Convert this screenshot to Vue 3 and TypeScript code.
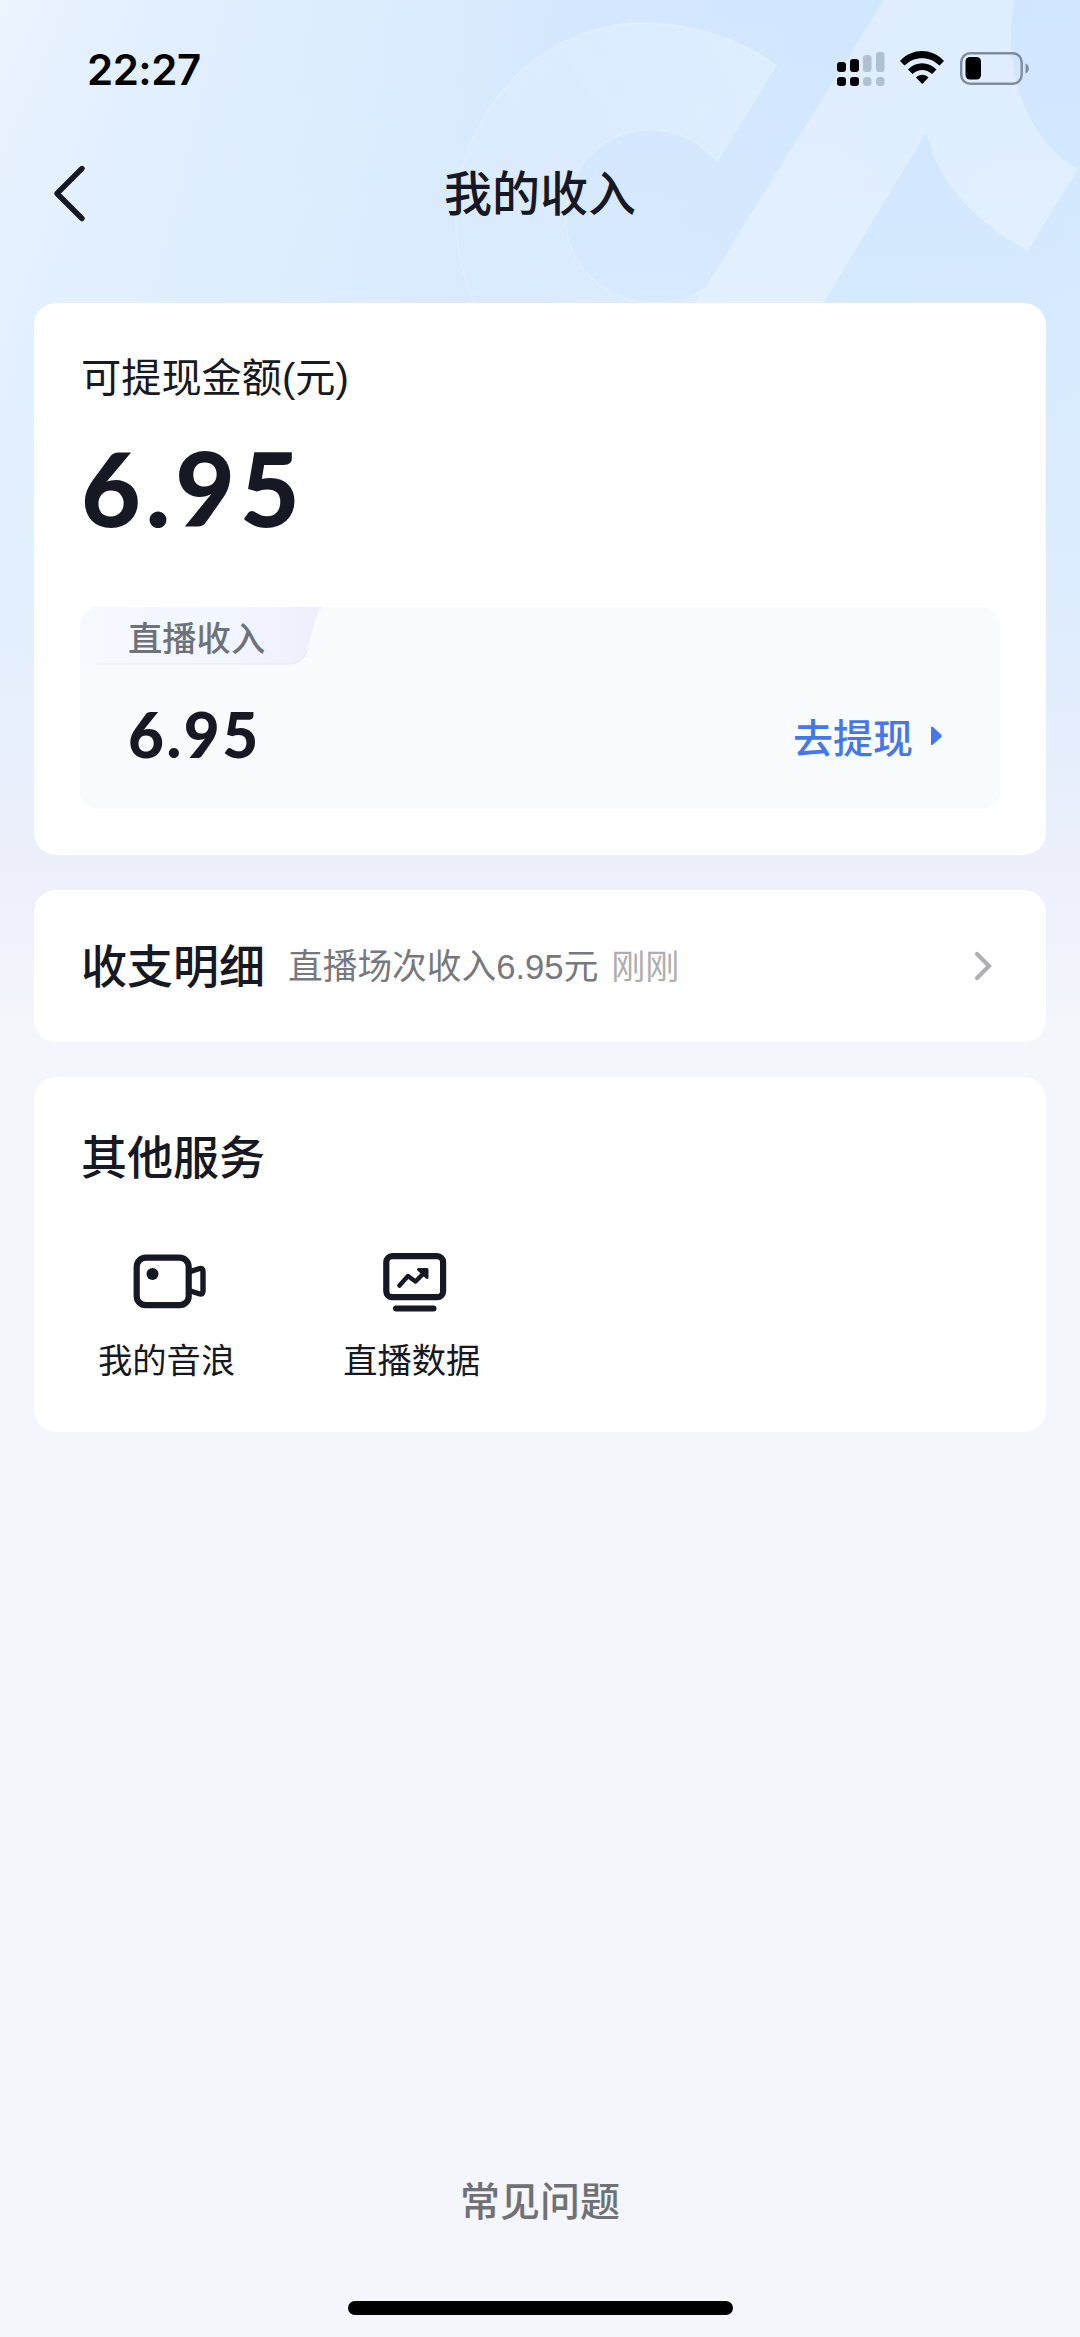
<script setup lang="ts">
interface Service {
  key: 'camera' | 'chart'
  label: string
}

const amount = '6.95'
const services: Service[] = [
  { key: 'camera', label: '我的音浪' },
  { key: 'chart', label: '直播数据' },
]
</script>

<template>
  <div class="page">
    <svg class="watermark" width="1080" height="310" viewBox="0 0 1080 310" aria-hidden="true">
      <defs>
        <linearGradient id="mark" x1="450" y1="260" x2="760" y2="60" gradientUnits="userSpaceOnUse">
          <stop offset="0" stop-color="#fff" stop-opacity="0.03" />
          <stop offset="1" stop-color="#fff" stop-opacity="0.26" />
        </linearGradient>
      </defs>
      <path
        d="M776 65C735 37 690 23 643 23C540 23 456 115 456 215C456 250 463 280 478 312L690 312L704 288C690 299 675 303 657 303C605 303 566 265 566 220C566 170 600 130 650 130C676 130 699 141 717 161Z"
        fill="url(#mark)" stroke="#e8f5ff" stroke-opacity=".4" stroke-width="2" />
      <path
        d="M885 -2L690 312L818 312L926 133C938 183 974 221 1028 251L1078 169C1032 143 1000 80 1015 -2Z"
        fill="#fff" fill-opacity=".3" />
    </svg>

    <header class="status">
      <span class="time">22:27</span>
      <svg width="194" height="40" viewBox="836 48 194 40">
        <rect x="837" y="62" width="9" height="10" rx="3.2" />
        <rect x="850" y="59" width="9" height="13" rx="3.2" />
        <g fill="#b1c0d1">
          <rect x="863" y="55" width="8.5" height="17" rx="3.2" />
          <rect x="876" y="52" width="8.5" height="20" rx="3.2" />
          <rect x="863" y="77" width="8.5" height="9" rx="3.5" />
          <rect x="876" y="77" width="8.5" height="9" rx="3.5" />
        </g>
        <rect x="837" y="77" width="9" height="9" rx="3.2" />
        <rect x="850" y="77" width="9" height="9" rx="3.2" />
        <path d="M900 61C912.500 47.800 931.500 47.800 944 61L939.500 65.500C929.500 55.700 914.500 55.700 904.500 65.500Z" />
        <path d="M908 69.500C916 61.200 928 61.200 936.500 69.500L932 74C926 68.500 918.500 68.500 912.500 74Z" />
        <path d="M916 77.500C919.500 73.700 925 73.700 928.500 77.500L922.200 84Z" />
        <rect x="961.200" y="53.200" width="60.500" height="30.500" rx="9" fill="none" stroke="#7e8c9c" stroke-width="2.400" />
        <rect x="965.500" y="57" width="15.500" height="22.500" rx="4.500" />
        <path d="M1025.500 63.500C1030 65 1030 72 1025.500 73.500Z" fill="#7e8c9c" />
      </svg>
    </header>

    <nav class="nav">
      <svg class="back" width="36" height="60" viewBox="0 0 36 60">
        <path d="M30 4.500L5 29.500L30 54.500" fill="none" stroke="#161823" stroke-width="5.400" stroke-linecap="round" stroke-linejoin="round" />
      </svg>
      <h1>我的收入</h1>
    </nav>

    <main class="cards">
      <section class="card balance">
        <p class="caption">可提现金额(元)</p>
        <p class="total">{{ amount }}</p>
        <div class="panel">
          <div class="tab">
            <svg class="tab-shape" width="244" height="58" viewBox="0 0 244 58">
              <defs>
                <linearGradient id="tab" x1="0" x2="1" y1="0" y2="0">
                  <stop offset="0" stop-color="#f6f9ff" />
                  <stop offset=".6" stop-color="#f2f6ff" />
                  <stop offset="1" stop-color="#edf0fc" />
                </linearGradient>
              </defs>
              <path d="M0 0H243Q238 3 236 11L227 43Q223 57 208 57H0Z" fill="url(#tab)" />
              <path d="M16 57H208Q223 57 227 43" fill="none" stroke="#e8eaf5" stroke-width="1.200" />
            </svg>
            <span>直播收入</span>
          </div>
          <div class="panel-row">
            <strong>{{ amount }}</strong>
            <a class="withdraw">
              去提现
              <svg width="13" height="22" viewBox="0 0 13 22">
                <path d="M1 3Q1 .500 3 2L11 9.500Q12.500 11 11 12.500L3 19.500Q1 21 1 18.500Z" fill="#4577ea" />
              </svg>
            </a>
          </div>
        </div>
      </section>

      <section class="card detail">
        <h2>收支明细</h2>
        <span class="summary">直播场次收入6.95元</span>
        <span class="when">刚刚</span>
        <svg class="chevron" width="20" height="32" viewBox="0 0 20 32">
          <path d="M4 4L16 16L4 28" fill="none" stroke="#b0b0b3" stroke-width="4.200" stroke-linecap="round" stroke-linejoin="miter" />
        </svg>
      </section>

      <section class="card services">
        <h2>其他服务</h2>
        <ul>
          <li v-for="item in services" :key="item.key">
            <svg v-if="item.key === 'camera'" width="80" height="64" viewBox="126.500 1250 80 64" class="icon">
              <rect x="136.200" y="1257.700" width="52" height="47.500" rx="9" />
              <circle cx="152" cy="1274" r="6" fill="#161823" stroke="none" />
              <path d="M190 1271.500L198.500 1268.800Q202.500 1267.500 202.500 1271.500V1291Q202.500 1295 198.500 1293.700L190 1291" stroke-width="5.400" />
            </svg>
            <svg v-else width="80" height="64" viewBox="371.500 1250 80 64" class="icon">
              <rect x="385.800" y="1256.200" width="56.800" height="41" rx="6" />
              <path d="M395.500 1308.500H433" stroke-width="6" />
              <path d="M399 1285.500L407.500 1276L415 1281.500L425 1271.500" stroke-width="4.500" />
              <path d="M418 1269.500H426.500V1277.500Z" fill="#161823" stroke-width="3" />
            </svg>
            <span>{{ item.label }}</span>
          </li>
        </ul>
      </section>
    </main>

    <footer>
      <a>常见问题</a>
      <div class="home-bar"></div>
    </footer>
  </div>
</template>

<style>
body {
  margin: 0;
}
</style>

<style scoped>
* {
  box-sizing: border-box;
}
.page {
  position: relative;
  display: flex;
  flex-direction: column;
  width: 1080px;
  height: 2337px;
  overflow: hidden;
  color: #161823;
  font-family: "Liberation Sans", "Noto Sans CJK SC", sans-serif;
  background:
    linear-gradient(180deg, rgba(226, 240, 254, 0) 0, rgba(226, 240, 254, 0.35) 350px, rgba(230, 240, 253, 0.6) 620px, #edf0fb 870px, #f4f6fb 1040px),
    linear-gradient(110deg, #ecf4ff 0, #e2efff 9%, #ddedfe 19%, #d5e7ff 31%, #d0e6ff 50%, #d6e9ff 100%);
}
.watermark {
  position: absolute;
  inset: 0 0 auto;
}
h1, h2, p, ul {
  margin: 0;
  padding: 0;
  font-weight: 500;
}
.status {
  position: relative;
  display: flex;
  justify-content: space-between;
  height: 136px;
  padding: 48px 50px 0 87px;
}
.time {
  color: #000;
  font: 600 42px/43px Inter, sans-serif;
  letter-spacing: -0.5px;
}
.nav {
  position: relative;
  display: flex;
  align-items: center;
  height: 116px;
  padding-left: 52px;
}
.nav h1 {
  flex: 1;
  padding: 2px 88px 0 0;
  text-align: center;
  font-size: 48px;
  line-height: 60px;
}
.cards {
  position: relative;
  display: flex;
  flex-direction: column;
  gap: 35px;
  padding: 51px 34px 0;
}
.card {
  background: #fff;
  border-radius: 22px;
}
.balance {
  height: 552px;
  padding: 46px 46px 0;
}
.caption {
  padding-left: 1px;
  font-size: 40.200px;
  font-weight: 400;
  line-height: 60px;
}
.total {
  margin-top: 18px;
  padding-left: 1px;
  font: 900 103px/120px Lato, sans-serif;
  letter-spacing: 5px;
}
.panel {
  height: 202px;
  margin-top: 60px;
  background: #f8fcff;
  border-radius: 18px;
  overflow: hidden;
}
.tab {
  position: relative;
  height: 58px;
  padding: 5px 0 0 48px;
  color: #6f727b;
  font-size: 34.300px;
  font-weight: 500;
  line-height: 54px;
}
.tab span {
  position: relative;
}
.tab-shape {
  position: absolute;
  top: 0;
  left: 0;
}
.panel-row {
  display: flex;
  align-items: center;
  justify-content: space-between;
  height: 138px;
  padding: 0 57px 0 48px;
}
.panel-row strong {
  font: 900 62px/80px Lato, sans-serif;
  letter-spacing: 2.500px;
}
.withdraw {
  display: flex;
  align-items: center;
  gap: 17px;
  padding-top: 4px;
  color: #4577ea;
  font-size: 40px;
  font-weight: 500;
}
.detail {
  display: flex;
  align-items: center;
  height: 152px;
  padding: 0 53px 0 47px;
}
h2 {
  padding-top: 1px;
  font-size: 46px;
  line-height: 60px;
}
.summary {
  margin-left: 23px;
  padding-bottom: 4px;
  color: #77787d;
  font-size: 34.700px;
}
.when {
  margin-left: 13px;
  padding-bottom: 4px;
  color: #aeaeb1;
  font-size: 34px;
}
.chevron {
  margin-left: auto;
}
.services {
  height: 355px;
  padding: 50px 47px 0;
}
.services ul {
  display: flex;
  gap: 108px;
  margin-top: 62px;
  padding-left: 17px;
  list-style: none;
}
.services li {
  display: flex;
  flex-direction: column;
  align-items: center;
  gap: 22px;
  font-size: 34.300px;
  font-weight: 400;
  line-height: 50px;
}
.icon {
  fill: none;
  stroke: #161823;
  stroke-width: 6.2px;
  stroke-linecap: round;
  stroke-linejoin: round;
}
footer {
  display: flex;
  flex-direction: column;
  align-items: center;
  gap: 69px;
  margin-top: auto;
  padding-bottom: 22px;
}
footer a {
  color: #707176;
  font-size: 40px;
  font-weight: 500;
  line-height: 60px;
}
.home-bar {
  width: 385px;
  height: 14px;
  background: #000;
  border-radius: 7px;
}
</style>
